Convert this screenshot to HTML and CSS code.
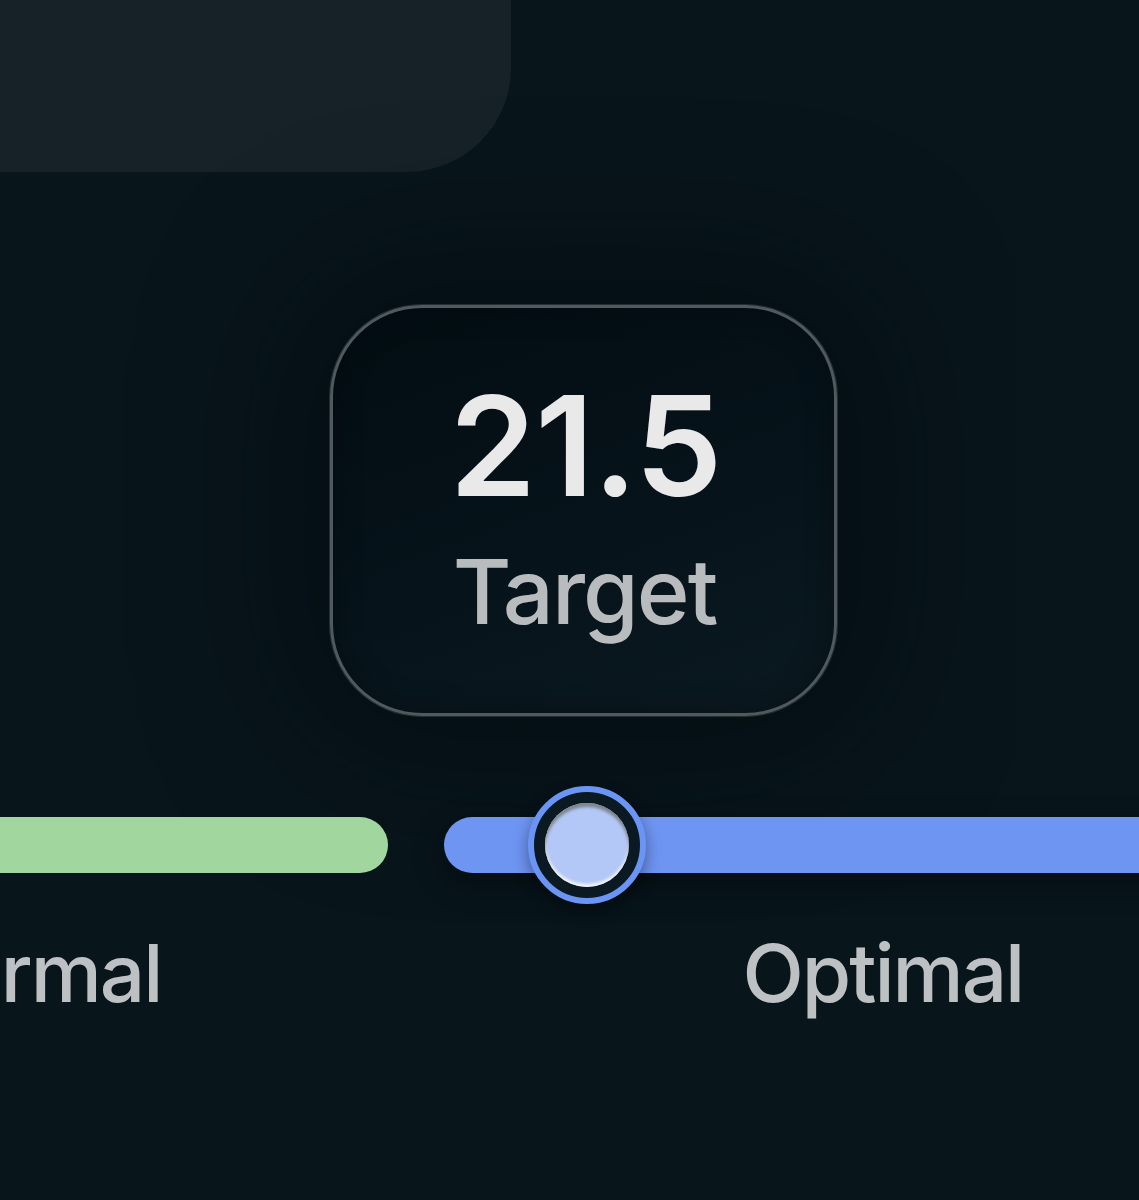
FILE: index.html
```html
<!DOCTYPE html>
<html>
<head>
<meta charset="utf-8">
<link rel="stylesheet" href="styles.css">
</head>
<body>
<div class="page">
  <div class="top-card"></div>
  <div class="target-wrap">
    <div class="target">
      <div class="value">21.5</div>
      <div class="label">Target</div>
    </div>
  </div>
  <div class="slider">
    <div class="seg seg-green"></div>
    <div class="seg seg-blue">
      <div class="thumb"><div class="knob"></div></div>
    </div>
  </div>
  <div class="legend">
    <span class="legend-normal">Normal</span>
    <span class="legend-optimal">Optimal</span>
  </div>
</div>
</body>
</html>
```

FILE: styles.css
```css
html, body {
  margin: 0;
  padding: 0;
  background: #08151b;
  overflow: hidden;
}
.page {
  width: 1139px;
  height: 1200px;
  position: relative;
  overflow: hidden;
  font-family: Inter, "Noto Sans", sans-serif;
  background: #08151b;
}
.top-card {
  width: 511px;
  height: 172px;
  background: #162128;
  border-bottom-right-radius: 104px;
}
.target-wrap {
  padding-top: 133px;
  padding-left: 330px;
}
.target {
  width: 507px;
  height: 411px;
  box-sizing: border-box;
  border-radius: 92px;
  border: 3px solid #4f595e;
  background: linear-gradient(160deg, #030d12 0%, #06131a 55%, #0b1920 100%);
  box-shadow: 0 0 0 1px rgba(130,140,145,0.25), 0 0 140px 40px rgba(2,8,11,0.5), inset 0 0 30px rgba(0,0,0,0.3);
  display: flex;
  flex-direction: column;
  align-items: center;
}
.value {
  margin-top: 68px;
  font-size: 139px;
  font-weight: 600;
  line-height: 1;
  color: #e9e9ea;
  letter-spacing: -1px;
  margin-left: 4px;
}
.label {
  margin-top: 32px;
  font-size: 90px;
  font-weight: 500;
  line-height: 1;
  color: #b9bcbf;
  letter-spacing: -2px;
  margin-left: 2px;
}
.slider {
  margin-top: 101px;
  display: flex;
  gap: 56px;
  height: 56px;
}
.seg {
  height: 56px;
  border-radius: 28px;
}
.seg-green {
  margin-left: -40px;
  flex: 0 0 428px;
  background: #a1d79f;
}
.seg-blue {
  flex: 1 1 auto;
  margin-right: -60px;
  background: #6f95f3;
  position: relative;
  box-shadow: 0 10px 30px rgba(0,0,0,0.35);
}
.thumb {
  position: absolute;
  left: 84px;
  top: -31px;
  width: 118px;
  height: 118px;
  box-sizing: border-box;
  border-radius: 50%;
  border: 6px solid #6a95f5;
  background: #0b1a22;
  display: flex;
  align-items: center;
  justify-content: center;
  box-shadow: 0 6px 16px rgba(0,0,0,0.4);
}
.knob {
  width: 84px;
  height: 84px;
  border-radius: 50%;
  background: #b3c8f7;
  box-shadow: inset 0 4px 3px rgba(120,125,130,0.9), inset 0 -3px 3px rgba(255,255,255,0.8), inset 2px 0 2px rgba(200,205,215,0.7);
}
.legend {
  margin-top: 60px;
  display: flex;
  font-size: 80px;
  font-weight: 500;
  color: #bec1c4;
  line-height: 1;
  letter-spacing: -2px;
}
.legend-normal {
  margin-left: -104px;
}
.legend-optimal {
  margin-left: 581px;
}
```
